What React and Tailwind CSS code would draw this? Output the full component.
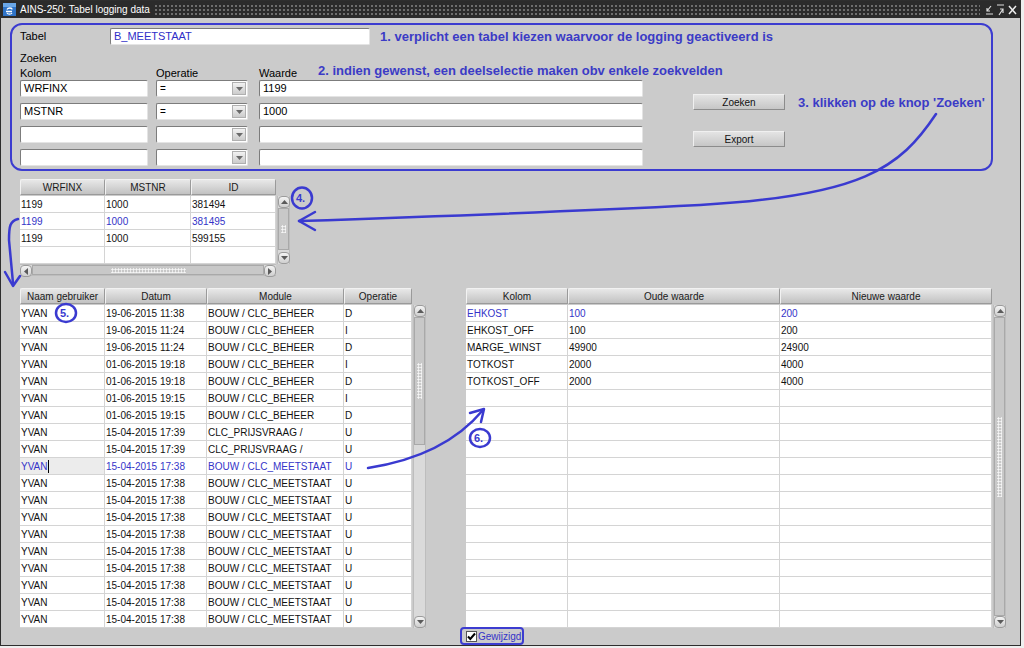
import React from "react";

const cellBorder = "border-b border-r border-[#d4d4d4]";

function Field({ w, children, blue }) {
  return (
    <div
      className={`${w} h-[17px] shrink-0 bg-white border border-[#7c7c7c] border-r-[#e4e4e4] border-b-[#e4e4e4] rounded-[2px] px-[3px] flex items-center text-[11px] ${
        blue ? "text-[#2f2fc8]" : "text-black"
      }`}
    >
      {children}
    </div>
  );
}

function Combo({ value }) {
  return (
    <div className="w-[92px] h-[17px] bg-white border border-[#7c7c7c] border-r-[#e4e4e4] border-b-[#e4e4e4] rounded-[2px] flex items-center">
      <span className="flex-1 pl-[3px] text-[10px] leading-none">{value}</span>
      <div className="w-[14px] h-[13px] mr-[1px] bg-linear-to-b from-[#f2f2f2] to-[#cccccc] border border-[#b0b0b0] flex items-center justify-center">
        <svg width="7" height="4" viewBox="0 0 7 4">
          <path d="M0 0h7L3.5 4z" fill="#6a6a6a" />
        </svg>
      </div>
    </div>
  );
}

function Btn({ children }) {
  return (
    <div className="w-[92px] h-[16px] shrink-0 flex items-center justify-center text-[10px] text-[#111] bg-linear-to-b from-[#e4e4e4] to-[#c6c6c6] border border-[#8c8c8c] border-t-[#f0f0f0] border-l-[#f0f0f0]">
      {children}
    </div>
  );
}

function Head({ w, children }) {
  return (
    <div
      className={`${w} h-[16px] shrink-0 flex items-center justify-center text-[10px] text-[#1a1a1a] bg-linear-to-b from-[#e8e8e8] to-[#c2c2c2] border border-[#9a9a9a] border-t-[#f2f2f2] border-l-[#f2f2f2] rounded-t-[2px]`}
    >
      {children}
    </div>
  );
}

function Row({ cols, cells, blue, focus }) {
  return (
    <div className="flex h-[17px]">
      {cells.map((c, i) => (
        <div
          key={i}
          className={`${cols[i]} shrink-0 h-full ${cellBorder} pl-[1px] flex items-center text-[10px] whitespace-nowrap ${
            blue ? "text-[#3434c8]" : "text-[#111]"
          } ${focus && i === 0 ? "bg-[#ececec]" : "bg-white"}`}
        >
          {c}
          {focus && i === 0 && <span className="w-px h-[13px] bg-black" />}
        </div>
      ))}
    </div>
  );
}

function Arrow({ up, left, right }) {
  let d = "M0 0h7L3.5 4z";
  let vb = "0 0 7 4";
  if (up) d = "M0 4h7L3.5 0z";
  if (left) {
    d = "M4 0v7L0 3.5z";
    vb = "0 0 4 7";
  }
  if (right) {
    d = "M0 0v7L4 3.5z";
    vb = "0 0 4 7";
  }
  return (
    <div className="w-[12px] h-[12px] shrink-0 rounded-[4px] border border-[#9c9c9c] bg-linear-to-b from-[#f4f4f4] to-[#cfcfcf] flex items-center justify-center">
      <svg width={left || right ? 4 : 7} height={left || right ? 7 : 4} viewBox={vb}>
        <path d={d} fill="#5a5a5a" />
      </svg>
    </div>
  );
}

function Grip({ cls }) {
  return (
    <div
      className={`${cls} bg-[radial-gradient(circle,#f6f6f6_0.9px,transparent_1.3px)] bg-[length:3px_3px]`}
    />
  );
}

function VScroll({ h, thumb, grip, full }) {
  return (
    <div className={`w-[13px] ${h} mt-[17px] ml-[1px] flex flex-col bg-[#dadada] border-x border-[#bdbdbd]`}>
      <Arrow up />
      <div className={`${thumb} bg-[#c8c8c8] border border-[#a9a9a9] flex items-center justify-center`}>
        <Grip cls={grip} />
      </div>
      {!full && <div className="flex-1" />}
      <Arrow />
    </div>
  );
}

const small = [
  ["1199", "1000", "381494"],
  ["1199", "1000", "381495"],
  ["1199", "1000", "599155"],
  ["", "", ""],
];

const logRows = [
  ["YVAN", "19-06-2015 11:38", "BOUW / CLC_BEHEER", "D"],
  ["YVAN", "19-06-2015 11:24", "BOUW / CLC_BEHEER", "I"],
  ["YVAN", "19-06-2015 11:24", "BOUW / CLC_BEHEER", "D"],
  ["YVAN", "01-06-2015 19:18", "BOUW / CLC_BEHEER", "I"],
  ["YVAN", "01-06-2015 19:18", "BOUW / CLC_BEHEER", "D"],
  ["YVAN", "01-06-2015 19:15", "BOUW / CLC_BEHEER", "I"],
  ["YVAN", "01-06-2015 19:15", "BOUW / CLC_BEHEER", "D"],
  ["YVAN", "15-04-2015 17:39", "CLC_PRIJSVRAAG /", "U"],
  ["YVAN", "15-04-2015 17:39", "CLC_PRIJSVRAAG /", "U"],
  ["YVAN", "15-04-2015 17:38", "BOUW / CLC_MEETSTAAT", "U"],
  ...Array.from({ length: 9 }, () => ["YVAN", "15-04-2015 17:38", "BOUW / CLC_MEETSTAAT", "U"]),
];

const changes = [
  ["EHKOST", "100", "200"],
  ["EHKOST_OFF", "100", "200"],
  ["MARGE_WINST", "49900", "24900"],
  ["TOTKOST", "2000", "4000"],
  ["TOTKOST_OFF", "2000", "4000"],
  ...Array.from({ length: 14 }, () => ["", "", ""]),
];

const smallCols = ["w-[85px]", "w-[86px]", "w-[85px]"];
const logCols = ["w-[85px]", "w-[102px]", "w-[137px]", "w-[68px]"];
const chgCols = ["w-[102px]", "w-[212px]", "w-[212px]"];

const note = "font-bold text-[13px] leading-none text-[#3b3bc6] whitespace-nowrap";

function TitleBar() {
  return (
    <div className="h-[17px] shrink-0 flex items-center bg-[#2b2b2b] text-white">
      <svg width="13" height="13" viewBox="0 0 13 13" className="ml-[2px]">
        <rect x="0" y="0" width="13" height="13" fill="#2f74c8" />
        <rect x="0" y="0" width="13" height="4" fill="#6aa7e8" />
        <path d="M3 8.5h6M4 6.5c1-2 5-2 5 0M4 10c1 1.5 4 1.5 5 0" stroke="#fff" strokeWidth="1.3" fill="none" />
      </svg>
      <span className="ml-[4px] text-[10px] leading-none whitespace-nowrap">AINS-250: Tabel logging data</span>
      <div className="flex-1 h-[11px] mx-[4px] bg-[radial-gradient(circle,#6e6e6e_0.8px,transparent_1.1px)] bg-[length:4px_4px]" />
      <svg width="34" height="12" viewBox="0 0 34 12" className="mr-[2px]">
        <path d="M2 10h7M7 2L3 7M3 4v3h3" stroke="#ddd" strokeWidth="1.2" fill="none" />
        <path d="M13 1h7M15 11l4-6M19 9V5h-3" stroke="#ddd" strokeWidth="1.2" fill="none" />
        <path d="M25 2l7 8M32 2l-7 8" stroke="#eee" strokeWidth="1.5" fill="none" />
      </svg>
    </div>
  );
}

export default function App() {
  return (
    <div className="relative w-[1024px] h-[648px] bg-[#efefef] overflow-hidden font-['Liberation_Sans',Arial,sans-serif]">
      <div className="w-[1021px] h-[646px] flex flex-col border border-[#2e2e2e] bg-[#cbcbcb]">
        <TitleBar />

        {/* zoek-groep */}
        <div className="ml-[9px] mt-[5px] w-[983px] h-[148px] shrink-0 border-2 border-[#3c3cd0] rounded-[12px] flex flex-col pl-[8px]">
          <div className="flex items-center mt-[3px] h-[17px]">
            <span className="w-[90px] text-[11px]">Tabel</span>
            <Field w="w-[260px]" blue>
              B_MEETSTAAT
            </Field>
            <span className={`${note} ml-[10px]`}>
              1. verplicht een tabel kiezen waarvoor de logging geactiveerd is
            </span>
          </div>
          <div className="mt-[7px] h-[12px] leading-[12px] text-[11px]">Zoeken</div>
          <div className="mt-[3px] h-[12px] flex items-center text-[11px]">
            <span className="w-[136px]">Kolom</span>
            <span className="w-[103px]">Operatie</span>
            <span className="w-[59px]">Waarde</span>
            <span className={`${note} -mt-[6px]`}>
              2. indien gewenst, een deelselectie maken obv enkele zoekvelden
            </span>
          </div>
          <div className="mt-[1px] flex">
            <div className="flex flex-col gap-[6px]">
              <Field w="w-[128px]">WRFINX</Field>
              <Field w="w-[128px]">MSTNR</Field>
              <Field w="w-[128px]" />
              <Field w="w-[128px]" />
            </div>
            <div className="ml-[8px] flex flex-col gap-[6px]">
              <Combo value="=" />
              <Combo value="=" />
              <Combo value="" />
              <Combo value="" />
            </div>
            <div className="ml-[11px] flex flex-col gap-[6px]">
              <Field w="w-[384px]">1199</Field>
              <Field w="w-[384px]">1000</Field>
              <Field w="w-[384px]" />
              <Field w="w-[384px]" />
            </div>
            <div className="ml-[50px] flex flex-col">
              <div className="mt-[14px] h-[16px] flex items-center">
                <Btn>Zoeken</Btn>
                <span className={`${note} ml-[13px]`}>3. klikken op de knop 'Zoeken'</span>
              </div>
              <div className="mt-[21px]">
                <Btn>Export</Btn>
              </div>
            </div>
          </div>
        </div>

        {/* resultaat-tabel */}
        <div className="ml-[19px] mt-[8px] flex items-start">
          <div className="flex flex-col">
            <div className="flex mb-[1px]">
              <Head w="w-[85px]">WRFINX</Head>
              <Head w="w-[86px]">MSTNR</Head>
              <Head w="w-[85px]">ID</Head>
            </div>
            {small.map((r, i) => (
              <Row key={i} cols={smallCols} cells={r} blue={i === 1} />
            ))}
            <div className="w-[256px] h-[12px] flex bg-[#dadada] border-y border-[#bdbdbd]">
              <Arrow left />
              <div className="flex-1 bg-[#c8c8c8] border border-[#a9a9a9] flex items-center justify-center">
                <Grip cls="w-[75px] h-[5px]" />
              </div>
              <Arrow right />
            </div>
          </div>
          <VScroll h="h-[68px]" thumb="h-[42px]" grip="w-[5px] h-[8px]" />
        </div>

        {/* logging + wijzigingen */}
        <div className="ml-[19px] mt-[12px] flex items-start">
          <div className="flex items-start">
            <div className="flex flex-col">
              <div className="flex mb-[1px]">
                <Head w="w-[85px]">Naam gebruiker</Head>
                <Head w="w-[102px]">Datum</Head>
                <Head w="w-[137px]">Module</Head>
                <Head w="w-[68px]">Operatie</Head>
              </div>
              {logRows.map((r, i) => (
                <Row key={i} cols={logCols} cells={r} blue={i === 9} focus={i === 9} />
              ))}
            </div>
            <VScroll h="h-[323px]" thumb="h-[128px]" grip="w-[5px] h-[36px]" />
          </div>
          <div className="ml-[40px] flex items-start">
            <div className="flex flex-col">
              <div className="flex mb-[1px]">
                <Head w="w-[102px]">Kolom</Head>
                <Head w="w-[212px]">Oude waarde</Head>
                <Head w="w-[212px]">Nieuwe waarde</Head>
              </div>
              {changes.map((r, i) => (
                <Row key={i} cols={chgCols} cells={r} blue={i === 0} />
              ))}
            </div>
            <VScroll h="h-[323px]" thumb="flex-1" grip="w-[5px] h-[80px] -mt-[20px]" full />
          </div>
        </div>

        <div className="ml-[459px] -mt-[1px] w-[64px] h-[18px] border-2 border-[#3c3cd0] rounded-[4px] flex items-center pl-[4px] gap-[1px]">
          <svg width="11" height="11" viewBox="0 0 11 11">
            <rect x="0.5" y="0.5" width="10" height="10" fill="#fff" stroke="#555" />
            <path d="M2 5.5l2.3 2.5L9 2.5" stroke="#000" strokeWidth="2" fill="none" />
          </svg>
          <span className="text-[10px] text-[#3434c8]">Gewijzigd</span>
        </div>
      </div>

      {/* handgetekende annotaties */}
      <svg className="absolute inset-0 pointer-events-none" width="1024" height="648" viewBox="0 0 1024 648">
        <g stroke="#3a3ad0" strokeWidth="2.5" fill="none" strokeLinecap="round" strokeLinejoin="round">
          <path d="M936 114 C900 168 862 196 700 205 C560 212 420 217 299 221" />
          <path d="M315 212 L299 221 L315 230" />
          <path d="M18 219 C10 221 9 226 9 240 L13 283" />
          <path d="M5 272 L13 286 L20 276" />
          <path d="M368 468 C420 460 458 440 483 410" />
          <path d="M470 413 L484 409 L481 422" />
          <ellipse cx="302" cy="198" rx="10" ry="10.5" />
          <ellipse cx="66" cy="313" rx="10" ry="9" />
          <ellipse cx="480" cy="438" rx="10" ry="9" />
        </g>
        <g fill="#3a3ad0" fontFamily="Liberation Sans, Arial, sans-serif" fontWeight="bold" fontSize="11">
          <text x="296" y="202">4.</text>
          <text x="60" y="317">5.</text>
          <text x="474" y="442">6.</text>
        </g>
      </svg>
    </div>
  );
}
